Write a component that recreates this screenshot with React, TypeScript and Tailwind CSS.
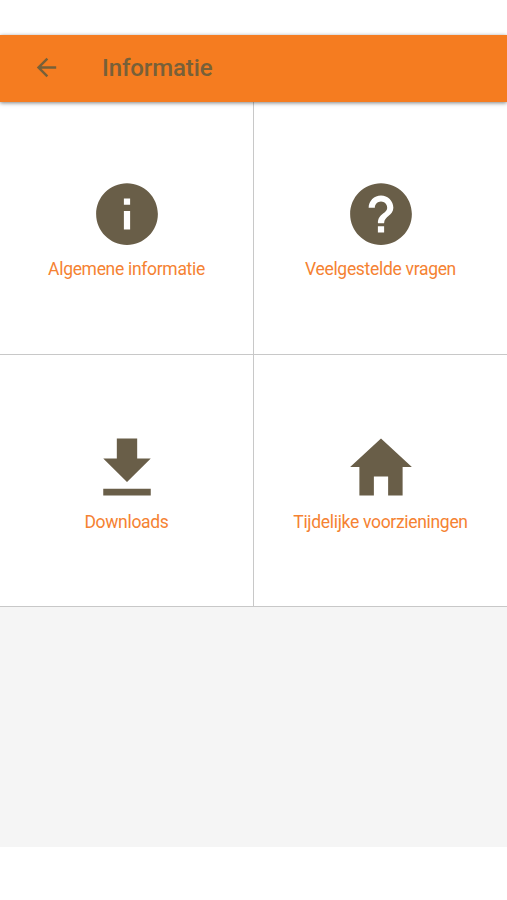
import type { ComponentType } from "react";
import { IoMdArrowBack, IoMdDownload, IoMdHelpCircle, IoMdHome, IoMdInformationCircle } from "react-icons/io";

type Tile = { label: string; icon: ComponentType<{ className?: string }> };

const tiles: Tile[] = [
  { label: "Algemene informatie", icon: IoMdInformationCircle },
  { label: "Veelgestelde vragen", icon: IoMdHelpCircle },
  { label: "Downloads", icon: IoMdDownload },
  { label: "Tijdelijke voorzieningen", icon: IoMdHome },
];

function TopBar() {
  return (
    <header className="relative flex h-[67px] items-center bg-[#f57c20] pb-0.5 pl-[31.5px] text-[#776039] shadow-[0_1px_4px_rgba(0,0,0,0.5)]">
      <button type="button" aria-label="Terug">
        <IoMdArrowBack className="size-[29px]" />
      </button>
      <h1 className="ml-[41.5px] text-[24px] leading-8 font-medium tracking-[-0.1px]">Informatie</h1>
    </header>
  );
}

export default function App() {
  return (
    <div className="flex h-[900px] w-[507px] flex-col bg-white pt-[35px] font-[Roboto,sans-serif]">
      <TopBar />
      <main className="h-[745px] bg-[#f5f5f5]">
        <div className="grid grid-cols-[254px_253px] grid-rows-[253px_252px]">
          {tiles.map(({ label, icon: Icon }) => (
            <button
              key={label}
              type="button"
              className="flex flex-col items-center border-b border-[#c8c8c8] bg-white pt-[74px] odd:border-r"
            >
              <Icon className="size-[76px] text-[#695e48]" />
              <span className="mt-[3px] text-[17.5px] leading-7 tracking-[-0.31px] text-[#f58232]">{label}</span>
            </button>
          ))}
        </div>
      </main>
    </div>
  );
}
